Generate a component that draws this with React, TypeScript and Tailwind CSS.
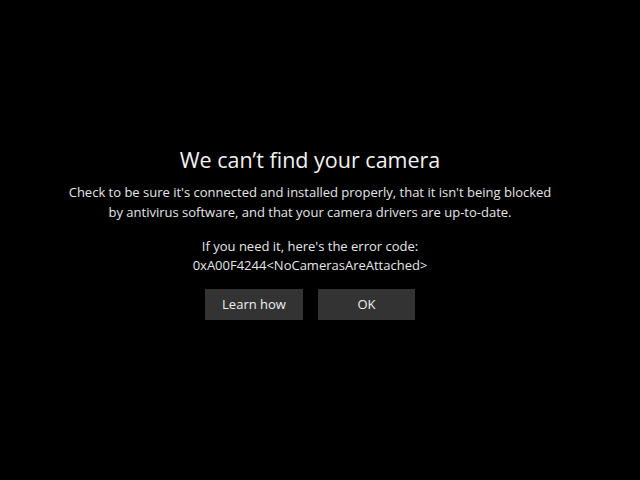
export default function App() {
  return (
    <div
      className="w-[640px] h-[480px] bg-black text-white flex flex-col items-center pt-[146px] pr-[20px]"
      style={{ fontFamily: '"Open Sans", "Noto Sans", sans-serif' }}
    >
      <h1 className="text-[21.5px] leading-[28px] font-normal text-[#f2f2f2]">We can’t find your camera</h1>
      <p className="mt-[8px] text-[13px] leading-[20px] text-center text-[#e6e6e6]">
        Check to be sure it's connected and installed properly, that it isn't being blocked
        <br />
        by antivirus software, and that your camera drivers are up-to-date.
      </p>
      <p className="mt-[15px] text-[13px] leading-[19px] text-center text-[#e6e6e6]">
        If you need it, here's the error code:
        <br />
        0xA00F4244&lt;NoCamerasAreAttached&gt;
      </p>
      <div className="mt-[14px] flex gap-[15px]">
        <button className="w-[98px] h-[31px] bg-[#333333] text-[13px] text-[#f0f0f0]">Learn how</button>
        <button className="w-[97px] h-[31px] bg-[#333333] text-[13px] text-[#f0f0f0]">OK</button>
      </div>
    </div>
  );
}
